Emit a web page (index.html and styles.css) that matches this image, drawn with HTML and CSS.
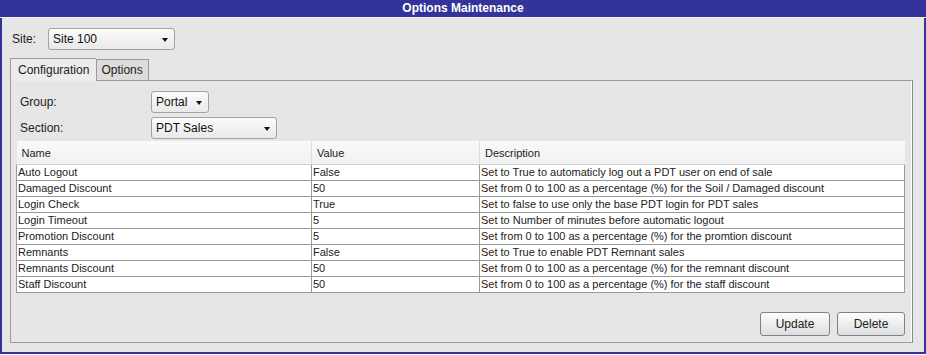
FILE: index.html
```html
<!DOCTYPE html>
<html lang="en">
<head>
    <meta charset="UTF-8">
    <title>Options Maintenance</title>
    <link rel="stylesheet" href="styles.css">
</head>
<body>
    <div class="window">
        <div class="title">Options Maintenance</div>

        <div class="site-row">
            <label class="site-label">Site:</label>
            <div class="combo combo-site">Site 100<span class="arrow"></span></div>
        </div>

        <div class="tabs">
            <div class="tab active">Configuration</div>
            <div class="tab">Options</div>
        </div>

        <div class="panel">
            <div class="field">
                <label>Group:</label>
                <div class="combo combo-group">Portal<span class="arrow"></span></div>
            </div>
            <div class="field">
                <label>Section:</label>
                <div class="combo combo-section">PDT Sales<span class="arrow"></span></div>
            </div>

            <table class="grid">
                <thead>
                    <tr>
                        <th class="col-name">Name</th>
                        <th class="col-value">Value</th>
                        <th>Description</th>
                    </tr>
                </thead>
                <tbody>
                    <tr><td>Auto Logout</td><td>False</td><td>Set to True to automaticly log out a PDT user on end of sale</td></tr>
                    <tr><td>Damaged Discount</td><td>50</td><td>Set from 0 to 100 as a percentage (%) for the Soil / Damaged discount</td></tr>
                    <tr><td>Login Check</td><td>True</td><td>Set to false to use only the base PDT login for PDT sales</td></tr>
                    <tr><td>Login Timeout</td><td>5</td><td>Set to Number of minutes before automatic logout</td></tr>
                    <tr><td>Promotion Discount</td><td>5</td><td>Set from 0 to 100 as a percentage (%) for the promtion discount</td></tr>
                    <tr><td>Remnants</td><td>False</td><td>Set to True to enable PDT Remnant sales</td></tr>
                    <tr><td>Remnants Discount</td><td>50</td><td>Set from 0 to 100 as a percentage (%) for the remnant discount</td></tr>
                    <tr><td>Staff Discount</td><td>50</td><td>Set from 0 to 100 as a percentage (%) for the staff discount</td></tr>
                </tbody>
            </table>

            <div class="buttons">
                <button class="btn btn-update">Update</button>
                <button class="btn btn-delete">Delete</button>
            </div>
        </div>
    </div>
</body>
</html>
```

FILE: styles.css
```css
body {
    margin: 0;
    font-family: "Liberation Sans", Arial, sans-serif;
    font-size: 12px;
    color: #222;
    background-color: #fff;
}
.window {
    width: 926px;
    height: 354px;
    box-sizing: border-box;
    border: 2px solid #333399;
    border-top: 0;
    background-color: #e6e6e6;
}
.title {
    height: 17px;
    line-height: 17px;
    margin: 0 -2px;
    background-color: #333399;
    color: #fff;
    font-weight: bold;
    text-align: center;
    border-bottom: 1px solid #eef0ea;
}
.site-row {
    display: flex;
    align-items: center;
    margin: 10px 0 0 10px;
}
.site-label {
    width: 36px;
}
.combo {
    position: relative;
    box-sizing: border-box;
    height: 22px;
    line-height: 20px;
    padding-left: 4px;
    border: 1px solid #a3a3a3;
    border-radius: 3px;
    background: linear-gradient(#fbfbfb, #e9e9e9);
    color: #111;
}
.arrow {
    position: absolute;
    right: 6px;
    top: 9px;
    border-left: 3px solid transparent;
    border-right: 3px solid transparent;
    border-top: 4px solid #111;
}
.combo-site {
    width: 127px;
}
.combo-group {
    width: 58px;
}
.combo-section {
    width: 126px;
}
.tabs {
    display: flex;
    align-items: flex-end;
    margin: 7px 0 0 8px;
    height: 23px;
}
.tab {
    box-sizing: border-box;
    height: 21px;
    line-height: 21px;
    padding: 0 5px 0 4px;
    border: 1px solid #9a9a9a;
    border-bottom: 0;
    background-color: #dcdcdc;
}
.tab.active {
    height: 23px;
    line-height: 22px;
    padding: 0 7px 0 7px;
    background-color: #ececec;
    border-right: 0;
    position: relative;
    top: 1px;
}
.panel {
    display: flex;
    flex-direction: column;
    box-sizing: border-box;
    width: 903px;
    height: 263px;
    margin-left: 8px;
    padding: 10px 7px 6px 5px;
    border: 1px solid #9a9a9a;
    border-right-color: #8a8a8a;
    box-shadow: inset -1px 0 0 #fff;
}
.field {
    display: flex;
    align-items: center;
    margin-bottom: 4px;
}
.field label {
    width: 131px;
    padding-left: 4px;
}
.grid {
    width: 889px;
    margin-top: -2px;
    border-collapse: collapse;
    font-size: 11px;
    table-layout: fixed;
}
.grid th {
    box-sizing: border-box;
    height: 23px;
    padding: 1px 0 0 5px;
    text-align: left;
    font-weight: normal;
    background: linear-gradient(#f9f9f9, #f1f1f1);
    border-left: 1px solid #dedede;
    border-bottom: 1px solid #cfcfcf;
}
.grid th:first-child {
    border-left: 0;
}
.grid .col-name {
    width: 295px;
}
.grid .col-value {
    width: 168px;
}
.grid td {
    height: 15px;
    padding: 0 0 0 1px;
    line-height: 15px;
    background-color: #fff;
    border: 1px solid #999;
    white-space: nowrap;
    overflow: hidden;
}
.buttons {
    display: flex;
    justify-content: flex-end;
    gap: 7px;
    margin-top: auto;
}
.btn {
    box-sizing: border-box;
    height: 24px;
    font-family: "Liberation Sans", Arial, sans-serif;
    font-size: 12px;
    color: #222;
    border: 1px solid #7f7f8f;
    border-radius: 3px;
    background: linear-gradient(#fdfdfd, #dedede);
}
.btn-update {
    width: 70px;
}
.btn-delete {
    width: 68px;
}
```
